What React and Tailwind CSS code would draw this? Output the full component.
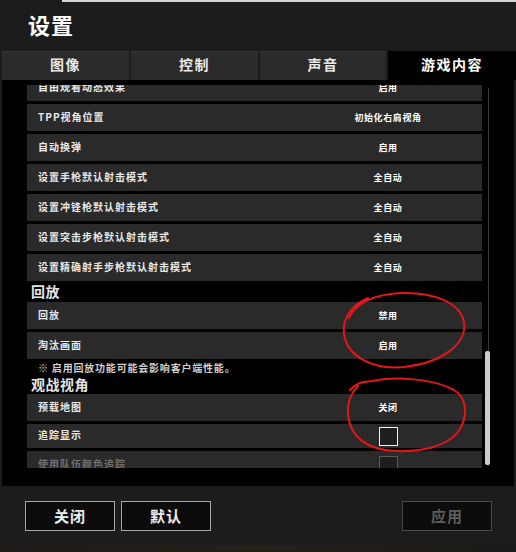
const rowsTop = [
  { label: '自由观看动态效果', value: '启用' },
  { label: 'TPP视角位置', value: '初始化右肩视角' },
  { label: '自动换弹', value: '启用' },
  { label: '设置手枪默认射击模式', value: '全自动' },
  { label: '设置冲锋枪默认射击模式', value: '全自动' },
  { label: '设置突击步枪默认射击模式', value: '全自动' },
  { label: '设置精确射手步枪默认射击模式', value: '全自动' },
];

const Row = ({ label, children, dim, className = 'h-[27px]' }) => (
  <div className={`shrink-0 flex items-center bg-[#2a2a2a] ${className}`}>
    <span
      className={`flex-1 pl-[11px] pb-[3px] text-[10px] font-bold tracking-[1px] ${
        dim ? 'text-[#707070]' : 'text-[#e8e8e8]'
      }`}
    >
      {label}
    </span>
    <div className="w-[120px] mr-[34px] flex justify-center items-center pt-[1px] text-[9px] font-bold tracking-[0.6px] text-white">
      {children}
    </div>
  </div>
);

const Checkbox = ({ dim }) => (
  <div
    className={`w-[19px] h-[19px] border-[1.5px] bg-[#1e1e1e] ${
      dim ? 'border-[#5a5a5a]' : 'border-[#f2f2f2]'
    }`}
  />
);

const SectionTitle = ({ children, className = '' }) => (
  <div className={`shrink-0 pl-[4px] text-[14px] font-bold tracking-[0.5px] text-[#e4e4e4] ${className}`}>
    {children}
  </div>
);

const Button = ({ children, disabled }) => (
  <button
    className={`w-[90px] h-[30px] bg-[#0c0c0c] border text-[15px] font-bold tracking-[1px] ${
      disabled ? 'border-[#4a4a4a] text-[#5c5c5c]' : 'border-[#a9a9a9] text-[#ededed]'
    }`}
  >
    {children}
  </button>
);

export default function App() {
  const tabs = ['图像', '控制', '声音'];

  return (
    <div className="relative w-[516px] h-[552px] bg-[#1c1c1c] flex flex-col overflow-hidden font-['Noto_Sans_CJK_SC','Noto_Sans',sans-serif]">
      {/* thin line at the very top */}
      <div className="h-[2px] flex shrink-0">
        <div className="w-[62px]" />
        <div className="flex-1 bg-[#d6d6d6]" />
      </div>

      {/* header */}
      <div className="h-[49px] shrink-0 flex items-center pl-[28px] pb-[6px]">
        <h1 className="text-[22px] font-bold tracking-[1px] text-white leading-none">设置</h1>
      </div>

      {/* tabs */}
      <div className="h-[29px] shrink-0 flex gap-[2px] pl-[2px] bg-[#1c1c1c]">
        {tabs.map((t, i) => (
          <div
            key={t}
            className={`${i === 2 ? 'w-[126px]' : 'w-[127px]'} flex items-center justify-center pb-[3px] bg-[#2b2b2b] border-t border-[#353535] text-[14px] font-bold tracking-[1.5px] text-[#e8e8e8]`}
          >
            {t}
          </div>
        ))}
        <div className="flex-1 flex items-center justify-center pb-[3px] bg-black text-[14px] font-bold tracking-[1.5px] text-white">
          游戏内容
        </div>
      </div>

      {/* content */}
      <div className="h-[406px] shrink-0 mx-[2px] bg-black flex">
        <div className="w-[480px] h-[383px] mt-[5px] overflow-hidden pl-[25px]">
          <div className="flex flex-col gap-[3px] -mt-[11px]">
            {rowsTop.map((r) => (
              <Row key={r.label} label={r.label}>
                {r.value}
              </Row>
            ))}
            <SectionTitle className="h-[15px] leading-[15px]">回放</SectionTitle>
            <Row label="回放">禁用</Row>
            <Row label="淘汰画面">启用</Row>
            <div className="h-[12px] leading-[12px] shrink-0 pl-[11px] text-[10px] font-bold tracking-[0.8px] text-[#cfcfcf]">
              ※ 启用回放功能可能会影响客户端性能。
            </div>
            <SectionTitle className="h-[14px] leading-[14px]">观战视角</SectionTitle>
            <Row label="预载地图">关闭</Row>
            <Row label="追踪显示" className="h-[24px]">
              <Checkbox />
            </Row>
            <Row label="使用队伍颜色追踪" dim>
              <Checkbox dim />
            </Row>
          </div>
        </div>

        {/* scrollbar */}
        <div className="w-[6px] ml-[3px] relative flex justify-center">
          <div className="w-px mt-[8px] h-[378px] bg-[#3a3a3a]" />
          <div className="absolute left-0 top-[271px] w-[5px] h-[114px] rounded-[2px] bg-[#cdcdcd]" />
        </div>
      </div>

      {/* footer */}
      <div className="flex-1 flex flex-col">
        <div className="flex-1 flex items-start pt-[15px] pl-[25px] pr-[24px]">
          <div className="flex gap-[6px]">
            <Button>关闭</Button>
            <Button>默认</Button>
          </div>
          <div className="ml-auto">
            <Button disabled>应用</Button>
          </div>
        </div>
        <div className="h-[7px] bg-gradient-to-r from-[#1e1b18] via-[#262019] to-[#1b1a18]" />
      </div>

      {/* red hand-drawn annotations */}
      <svg
        className="absolute inset-0 pointer-events-none"
        width="516"
        height="552"
        viewBox="0 0 516 552"
        fill="none"
      >
        <path
          d="M349 318 C356 302 376 294 402 293 C432 292 460 302 464 322 C467 342 446 362 404 367 C372 370 347 356 344 334 C342 318 352 305 368 298"
          stroke="#e3161b"
          strokeWidth="2"
          strokeLinecap="round"
        />
        <path
          d="M350 390 C356 383 362 382 372 381 C392 377 430 377 454 390 C468 398 468 418 458 432 C446 447 420 452 396 451 C368 450 350 438 348 414 C347 400 352 392 358 386"
          stroke="#e3161b"
          strokeWidth="2"
          strokeLinecap="round"
        />
      </svg>
    </div>
  );
}
